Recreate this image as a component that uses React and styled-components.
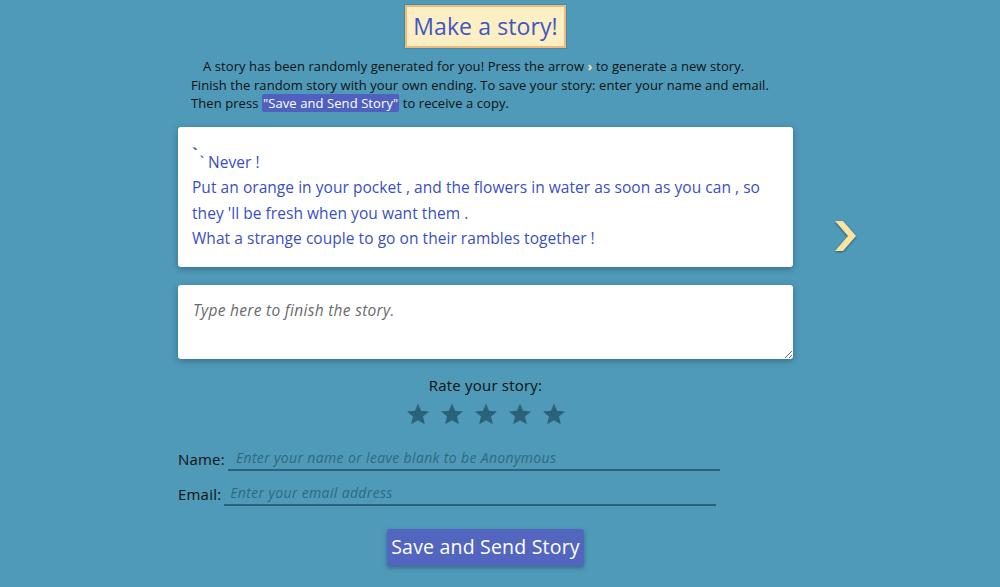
import React from "react";
import styled, { createGlobalStyle } from "styled-components";

const Global = createGlobalStyle`
  html, body { margin: 0; padding: 0; }
  body {
    background: #4f9ab8;
    font-family: "Open Sans", "Liberation Sans", sans-serif;
    color: #111;
    min-height: 587px;
  }
`;

const Page = styled.div`
  display: flex;
  padding-left: 178px;
  padding-top: 5px;
`;

const Column = styled.main`
  width: 615px;
  display: flex;
  flex-direction: column;
  align-items: center;
`;

const Title = styled.h1`
  margin: 0;
  padding: 4px 6px 5px;
  background: #fdefc4;
  border: 2px solid #f6b874;
  box-shadow: 0 0 0 1px #3d8fb0;
  color: #3f57c5;
  font-size: 23px;
  font-weight: 400;
  line-height: 30px;
  letter-spacing: 0.1px;
`;

const Intro = styled.p`
  margin: 9px 0 0;
  width: 600px;
  font-size: 13px;
  letter-spacing: 0.08px;
  line-height: 18.5px;
  text-indent: 12px;
  align-self: flex-start;
  padding-left: 13px;
  box-sizing: border-box;
  white-space: nowrap;
`;

const Caret = styled.span`
  color: #fde3a0;
  font-weight: 700;
`;

const Mark = styled.span`
  background: #5060c0;
  color: #fff;
  padding: 0 1px;
  border-radius: 2px;
`;

const StoryBox = styled.div`
  margin-top: 14px;
  width: 100%;
  box-sizing: border-box;
  height: 140px;
  background: #fff;
  border-radius: 3px;
  box-shadow: 0 2px 6px rgba(20, 60, 80, 0.45);
  padding: 23px 14px 0;
  color: #3a4fc0;
  font-size: 15.5px;
  letter-spacing: 0.05px;
  line-height: 25.5px;
`;

const Line = styled.div``;

const Tick = styled.span`
  display: inline-block;
  transform: translateY(-8px);
  font-weight: 700;
  margin-right: 2px;
`;

const Ending = styled.textarea`
  margin-top: 18px;
  width: 100%;
  box-sizing: border-box;
  height: 74px;
  border: none;
  border-radius: 3px;
  box-shadow: 0 2px 6px rgba(20, 60, 80, 0.45);
  padding: 14px 15px;
  font-family: inherit;
  font-size: 15.5px;
  letter-spacing: 0.3px;
  outline: none;
  resize: vertical;
  &::placeholder {
    color: #6b6b6b;
    font-style: italic;
  }
`;

const RateLabel = styled.div`
  margin-top: 16px;
  font-size: 15px;
  letter-spacing: 0.2px;
  line-height: 20px;
`;

const Stars = styled.div`
  display: flex;
  gap: 10px;
  margin-top: 7px;
`;

const Star = styled.svg`
  width: 24px;
  height: 24px;
  fill: #2a6279;
`;

const Form = styled.div`
  align-self: stretch;
  margin-top: 20px;
  display: flex;
  flex-direction: column;
  gap: 10px;
`;

const Field = styled.label`
  display: flex;
  align-items: flex-end;
  font-size: 15px;
  letter-spacing: 0.2px;
`;

const FieldLabel = styled.span`
  line-height: 20px;
  padding-bottom: 2px;
`;

const TextInput = styled.input`
  box-sizing: border-box;
  margin-left: 3px;
  width: 492px;
  background: transparent;
  border: none;
  border-bottom: 2px solid #2a6279;
  padding: 2px 0 2px ${(p) => p.$pad}px;
  font-family: inherit;
  font-size: 14px;
  letter-spacing: 0.35px;
  color: #111;
  outline: none;
  caret-color: #fde3a0;
  &::placeholder {
    color: #2d6a82;
    font-style: italic;
  }
`;

const SendButton = styled.button`
  margin-top: 23px;
  background: #5266c0;
  color: #fff;
  border: none;
  border-radius: 3px;
  padding: 6px 4px 7px;
  font-family: inherit;
  font-size: 19.5px;
  letter-spacing: 0.2px;
  line-height: 24px;
  box-shadow: 0 2px 4px rgba(20, 50, 70, 0.45);
  cursor: pointer;
`;

const NextArrow = styled.button`
  align-self: flex-start;
  margin-top: 214px;
  margin-left: 39px;
  width: 28px;
  height: 34px;
  padding: 0;
  background: none;
  border: none;
  cursor: pointer;
  filter: drop-shadow(0 1px 1px rgba(0, 40, 70, 0.6));
`;

const starPath =
  "M12 1.5l3.1 7.3 7.9.6-6 5.2 1.9 7.7L12 18.2l-6.9 4.1L7 14.6 1 9.4l7.9-.6z";

export default function App() {
  return (
    <>
      <Global />
      <Page>
        <Column>
          <Title>Make a story!</Title>
          <Intro>
            A story has been randomly generated for you! Press the arrow{" "}
            <Caret>›</Caret> to generate a new story.
            <br />
            Finish the random story with your own ending. To save your story:
            enter your name and email.
            <br />
            Then press <Mark>"Save and Send Story"</Mark> to receive a copy.
          </Intro>
          <StoryBox>
            <Line>
              <Tick>`</Tick>` Never !
            </Line>
            <Line>
              Put an orange in your pocket , and the flowers in water as soon as
              you can , so they 'll be fresh when you want them .
            </Line>
            <Line>What a strange couple to go on their rambles together !</Line>
          </StoryBox>
          <Ending placeholder="Type here to finish the story." />
          <RateLabel>Rate your story:</RateLabel>
          <Stars>
            {[0, 1, 2, 3, 4].map((i) => (
              <Star key={i} viewBox="0 0 24 24">
                <path d={starPath} />
              </Star>
            ))}
          </Stars>
          <Form>
            <Field>
              <FieldLabel>Name:</FieldLabel>
              <TextInput
                $pad={8}
                autoFocus
                placeholder="Enter your name or leave blank to be Anonymous"
              />
            </Field>
            <Field>
              <FieldLabel>Email:</FieldLabel>
              <TextInput $pad={6} placeholder="Enter your email address" />
            </Field>
          </Form>
          <SendButton>Save and Send Story</SendButton>
        </Column>
        <NextArrow aria-label="New story">
          <svg viewBox="0 0 28 34" width="28" height="34">
            <polygon points="3,2 11,2 24,17 11,32 3,32 16,17" fill="#fde3a0" />
          </svg>
        </NextArrow>
      </Page>
    </>
  );
}
